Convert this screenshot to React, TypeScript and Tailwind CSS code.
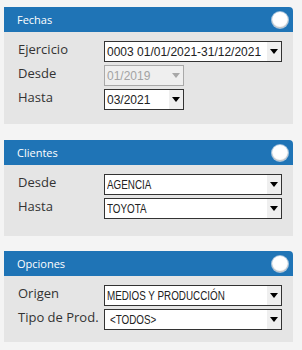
import React from "react";

const labelFont = { fontFamily: '"Open Sans", "Noto Sans", sans-serif' };

function Arrow({ disabled }: { disabled?: boolean }) {
  return (
    <div className="w-[14px] self-stretch bg-[#efefef] flex items-center justify-center">
      <div
        className={
          "w-0 h-0 border-l-[4px] border-r-[4px] border-t-[5px] border-l-transparent border-r-transparent " +
          (disabled ? "border-t-[#a8a8a8]" : "border-t-black")
        }
      />
    </div>
  );
}

function Select({
  value,
  width,
  disabled,
  narrow,
  indent,
}: {
  value: string;
  width: string;
  disabled?: boolean;
  narrow?: boolean;
  indent?: boolean;
}) {
  return (
    <div
      className={
        "h-[21px] flex items-stretch border " +
        width +
        (disabled ? " border-[#a9a9a9] bg-[#efefef]" : " border-[#333] bg-white")
      }
    >
      <div
        className={
          "flex-1 flex items-center overflow-hidden whitespace-nowrap text-[12px] leading-none " +
          (indent ? "pl-[5px] " : "pl-[2px] ") +
          (disabled ? "text-[#a3a3a3]" : "text-[#222]")
        }
        style={{ fontFamily: '"Liberation Sans", Arial, sans-serif' }}
      >
        <span className={narrow ? "inline-block origin-left scale-x-[0.82]" : "inline-block"}>
          {value}
        </span>
      </div>
      <Arrow disabled={disabled} />
    </div>
  );
}

function Row({ label, children }: { label: string; children: React.ReactNode }) {
  return (
    <div className="flex items-start">
      <div
        className="w-[86px] text-[13px] leading-[18px] text-[#333] -mt-[1px]"
        style={labelFont}
      >
        {label}
      </div>
      {children}
    </div>
  );
}

function Panel({
  title,
  pb,
  children,
}: {
  title: string;
  pb: string;
  children: React.ReactNode;
}) {
  return (
    <div className="ml-[4px] mr-[9px]">
      <div className="h-[25px] bg-[#1f74b6] rounded-tr-[4px] flex items-center justify-between pl-[13px] pr-[5px]">
        <span className="text-white text-[11px] leading-none" style={labelFont}>
          {title}
        </span>
        <div className="w-4 h-4 rounded-full bg-white shadow-[inset_0_-1px_1px_rgba(0,0,0,0.25),0_0_0_1px_rgba(200,215,230,0.8)]" />
      </div>
      <div className={"bg-[#e5e5e5] pl-[14px] pr-[11px] pt-[9px] flex flex-col gap-[3px] " + pb}>
        {children}
      </div>
    </div>
  );
}

export default function App() {
  return (
    <div className="w-[302px] h-[350px] bg-[#f4f4f4] pt-[7px] flex flex-col">
      <Panel title="Fechas" pb="pb-[14px]">
        <Row label="Ejercicio">
          <Select value="0003 01/01/2021-31/12/2021" width="w-[178px]" />
        </Row>
        <Row label="Desde">
          <Select value="01/2019" width="w-[80px]" disabled />
        </Row>
        <Row label="Hasta">
          <Select value="03/2021" width="w-[80px]" />
        </Row>
      </Panel>
      <div className="h-[16px]" />
      <Panel title="Clientes" pb="pb-[17px]">
        <Row label="Desde">
          <Select value="AGENCIA" width="w-[178px]" narrow />
        </Row>
        <Row label="Hasta">
          <Select value="TOYOTA" width="w-[178px]" narrow />
        </Row>
      </Panel>
      <div className="h-[15px]" />
      <Panel title="Opciones" pb="pb-[12px]">
        <Row label="Origen">
          <Select value="MEDIOS Y PRODUCCIÓN" width="w-[178px]" narrow />
        </Row>
        <Row label="Tipo de Prod.">
          <Select value="<TODOS>" width="w-[178px]" narrow indent />
        </Row>
      </Panel>
    </div>
  );
}
